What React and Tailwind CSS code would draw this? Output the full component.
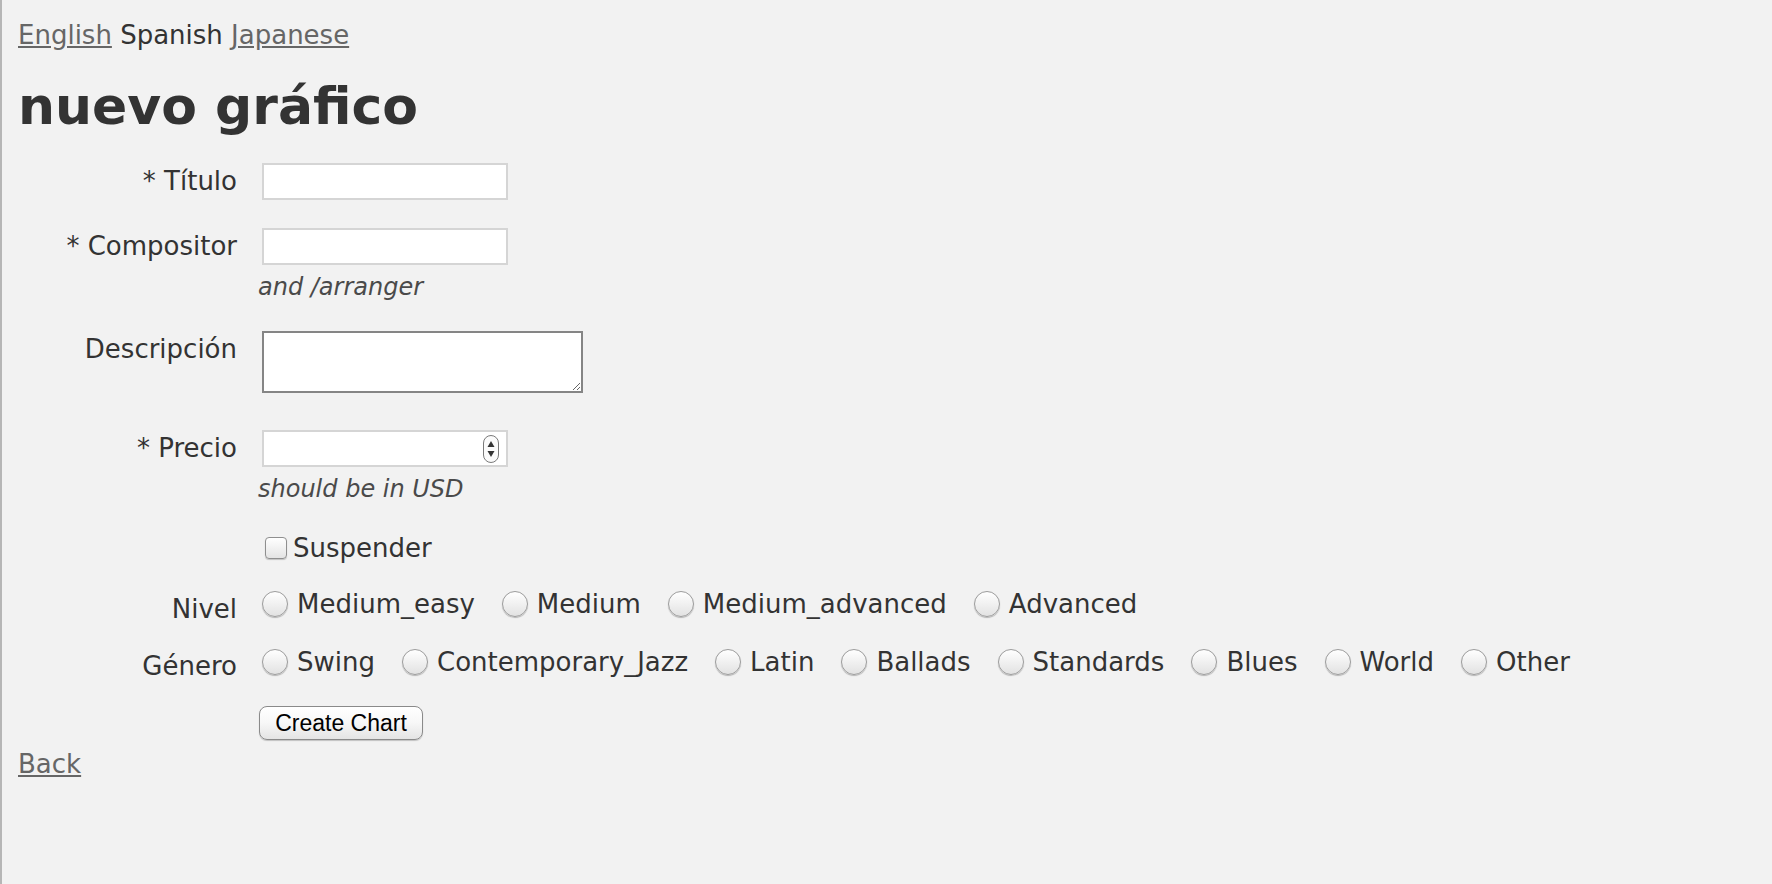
import React from "react";

function Radio() {
  return (
    <span className="inline-block w-[26px] h-[26px] shrink-0 rounded-full border border-[#9c9c9c] bg-linear-to-b from-white to-[#e2e2e2] shadow-[0_1px_1px_rgba(0,0,0,0.25)]" />
  );
}

function Option({ label }) {
  return (
    <span className="flex items-center gap-[9px]">
      <Radio />
      <span>{label}</span>
    </span>
  );
}

function Label({ children, extra = "" }) {
  return (
    <div className={"w-[219px] shrink-0 text-right leading-[37px] " + extra}>{children}</div>
  );
}

export default function App() {
  const niveles = ["Medium_easy", "Medium", "Medium_advanced", "Advanced"];
  const generos = ["Swing", "Contemporary_Jazz", "Latin", "Ballads", "Standards", "Blues", "World", "Other"];
  return (
    <div className="min-h-[884px] bg-[#f2f2f2] border-l-2 border-[#b6b6b6] pl-[16px] pt-[15px] font-['DejaVu_Sans','Verdana',sans-serif] text-[26px] text-[#333333]">
      <div className="leading-[40px]">
        <a href="#" className="text-[#666666] underline">English</a>{" "}
        <span>Spanish</span>{" "}
        <a href="#" className="text-[#666666] underline">Japanese</a>
      </div>

      <h1 className="mt-[21px] text-[52px] leading-[60px] font-bold text-[#333333]">nuevo gráfico</h1>

      <div className="mt-[27px] flex items-start gap-[25px]">
        <Label>* Título</Label>
        <input type="text" className="h-[37px] w-[246px] bg-white border-2 border-[#d5d5d5] outline-none" />
      </div>

      <div className="mt-[28px] flex items-start gap-[25px]">
        <Label>* Compositor</Label>
        <div className="flex flex-col">
          <input type="text" className="h-[37px] w-[246px] bg-white border-2 border-[#d5d5d5] outline-none" />
          <div className="mt-[5px] -ml-[4px] text-[24px] leading-[34px] italic text-[#4a4a4a]">and /arranger</div>
        </div>
      </div>

      <div className="mt-[27px] flex items-start gap-[25px]">
        <Label>Descripción</Label>
        <textarea className="block h-[62px] w-[321px] bg-white border-2 border-[#858585] outline-none" />
      </div>

      <div className="mt-[37px] flex items-start gap-[25px]">
        <Label>* Precio</Label>
        <div className="flex flex-col">
          <div className="h-[37px] w-[246px] bg-white border-2 border-[#d5d5d5] flex items-center justify-end pr-[7px]">
            <svg width="16" height="28" viewBox="0 0 16 28" className="mt-[1px]">
              <rect x="0.5" y="0.5" width="15" height="27" rx="7.5" fill="#fbfbfb" stroke="#7a7a7a" />
              <path d="M8 6 L11.5 12 L4.5 12 Z" fill="#333" />
              <path d="M8 22 L11.5 16 L4.5 16 Z" fill="#333" />
            </svg>
          </div>
          <div className="mt-[5px] -ml-[4px] text-[24px] leading-[34px] italic text-[#4a4a4a]">should be in USD</div>
        </div>
      </div>

      <div className="mt-[24px] flex items-center gap-[25px] h-[36px]">
        <div className="w-[219px] shrink-0" />
        <span className="flex items-center gap-[6px] ml-[3px]">
          <span className="inline-block w-[22px] h-[22px] rounded-[4px] border border-[#8f8f8f] bg-linear-to-b from-white to-[#e4e4e4] shadow-[0_1px_1px_rgba(0,0,0,0.2)]" />
          <span>Suspender</span>
        </span>
      </div>

      <div className="mt-[20px] h-[36px] flex items-start gap-[25px]">
        <div className="w-[219px] shrink-0 text-right leading-[36px] pt-[5px]">Nivel</div>
        <div className="h-[36px] flex items-center gap-[27px]">
          {niveles.map((n) => (
            <Option key={n} label={n} />
          ))}
        </div>
      </div>

      <div className="mt-[22px] h-[36px] flex items-start gap-[25px]">
        <div className="w-[219px] shrink-0 text-right leading-[36px] pt-[4px]">Género</div>
        <div className="h-[36px] flex items-center gap-[27px]">
          {generos.map((n) => (
            <Option key={n} label={n} />
          ))}
        </div>
      </div>

      <div className="mt-[26px] flex items-start gap-[25px]">
        <div className="w-[219px] shrink-0" />
        <button className="-ml-[3px] h-[34px] w-[164px] rounded-[8px] border border-[#8a8a8a] bg-linear-to-b from-white via-[#f7f7f7] to-[#e4e4e4] shadow-[0_1px_1px_rgba(0,0,0,0.2)] font-['Liberation_Sans',Arial,sans-serif] text-[23px] leading-[32px] text-black">
          Create Chart
        </button>
      </div>

      <div className="mt-[4px] leading-[40px]">
        <a href="#" className="text-[#666666] underline">Back</a>
      </div>
    </div>
  );
}
